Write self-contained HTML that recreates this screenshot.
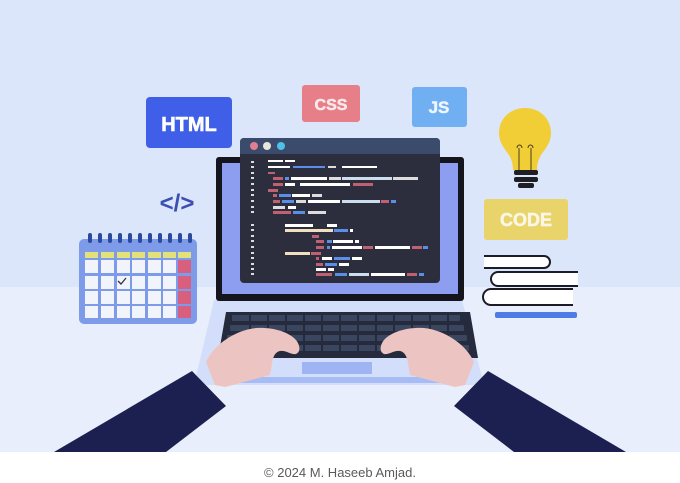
<!DOCTYPE html>
<html><head><meta charset="utf-8"><style>
html,body{margin:0;padding:0;width:680px;height:483px;overflow:hidden;background:#fff}
svg{display:block}
.cap{position:absolute;left:0;top:465px;width:680px;text-align:center;font:13px "Liberation Sans",sans-serif;color:#5a5a5a}
</style></head><body>
<svg width="680" height="452" viewBox="0 0 680 452" xmlns="http://www.w3.org/2000/svg" font-family="Liberation Sans, sans-serif">
<rect width="680" height="452" fill="#dce6fb"/>
<rect y="287" width="680" height="165" fill="#e8eefc"/>
<rect x="146" y="97" width="86" height="51" rx="4" fill="#3f5fe8"/>
<text x="189" y="131" text-anchor="middle" font-size="20" font-weight="bold" fill="#fff" stroke="#fff" stroke-width=".6">HTML</text>
<rect x="302" y="85" width="58" height="37" rx="3" fill="#e77f89"/>
<text x="331" y="110" text-anchor="middle" font-size="16" font-weight="bold" fill="#fbe8ea" stroke="#fbe8ea" stroke-width=".5">CSS</text>
<rect x="412" y="87" width="55" height="40" rx="3" fill="#70b0f2"/>
<text x="439" y="113" text-anchor="middle" font-size="17" font-weight="bold" fill="#eef6ff" stroke="#eef6ff" stroke-width=".5">JS</text>
<text x="177" y="211" text-anchor="middle" font-size="24" font-weight="bold" fill="#3a4fb0">&lt;/&gt;</text>
<path d="M525 108c-15 0-26 11-26 25 0 10 6 16 10 22 3 5 4 10 4 15h24c0-5 1-10 4-15 4-6 10-12 10-22 0-14-11-25-26-25z" fill="#f1cd36"/>
<path d="M519 170v-22m12 22v-22M517 148a2.5 3 0 1 1 5 0M528 148a2.5 3 0 1 1 5 0" stroke="#4a4020" stroke-width="1" fill="none"/>
<rect x="514" y="170" width="24" height="5" rx="2" fill="#1f1f24"/>
<rect x="514" y="177" width="24" height="5" rx="2" fill="#1f1f24"/>
<rect x="518" y="183" width="16" height="5" rx="2" fill="#1f1f24"/>
<rect x="484" y="199" width="84" height="41" rx="3" fill="#e8d46b"/>
<text x="526" y="226" text-anchor="middle" font-size="18" font-weight="bold" fill="#fbf7e4" stroke="#fbf7e4" stroke-width=".5">CODE</text>
<path d="M484 256h60a6 6 0 0 1 0 12h-60" fill="#fff" stroke="#1c1c28" stroke-width="2"/>
<path d="M578 272h-80a7 7 0 0 0 0 14h80" fill="#fff" stroke="#1c1c28" stroke-width="2"/>
<path d="M573 289h-82a8 8 0 0 0 0 16h82" fill="#fff" stroke="#1c1c28" stroke-width="2"/>
<rect x="495" y="312" width="82" height="6" rx="2" fill="#4f7be6"/>
<rect x="79" y="239" width="118" height="85" rx="5" fill="#7d9be9"/>
<g fill="#2a4aa0"><rect x="88" y="233" width="4" height="10" rx="2"/><rect x="98" y="233" width="4" height="10" rx="2"/><rect x="108" y="233" width="4" height="10" rx="2"/><rect x="118" y="233" width="4" height="10" rx="2"/><rect x="128" y="233" width="4" height="10" rx="2"/><rect x="138" y="233" width="4" height="10" rx="2"/><rect x="148" y="233" width="4" height="10" rx="2"/><rect x="158" y="233" width="4" height="10" rx="2"/><rect x="168" y="233" width="4" height="10" rx="2"/><rect x="178" y="233" width="4" height="10" rx="2"/><rect x="188" y="233" width="4" height="10" rx="2"/></g>
<g fill="#e3e27a"><rect x="85" y="252" width="13" height="6"/><rect x="101" y="252" width="13" height="6"/><rect x="117" y="252" width="13" height="6"/><rect x="132" y="252" width="13" height="6"/><rect x="148" y="252" width="13" height="6"/><rect x="163" y="252" width="13" height="6"/><rect x="178" y="252" width="13" height="6"/></g>
<g fill="#f2f4fc">
<rect x="85" y="260" width="13" height="13"/><rect x="101" y="260" width="13" height="13"/><rect x="117" y="260" width="13" height="13"/><rect x="132" y="260" width="13" height="13"/><rect x="148" y="260" width="13" height="13"/><rect x="163" y="260" width="13" height="13"/>
<rect x="85" y="276" width="13" height="13"/><rect x="101" y="276" width="13" height="13"/><rect x="117" y="276" width="13" height="13"/><rect x="132" y="276" width="13" height="13"/><rect x="148" y="276" width="13" height="13"/><rect x="163" y="276" width="13" height="13"/>
<rect x="85" y="291" width="13" height="13"/><rect x="101" y="291" width="13" height="13"/><rect x="117" y="291" width="13" height="13"/><rect x="132" y="291" width="13" height="13"/><rect x="148" y="291" width="13" height="13"/><rect x="163" y="291" width="13" height="13"/>
<rect x="85" y="306" width="13" height="12"/><rect x="101" y="306" width="13" height="12"/><rect x="117" y="306" width="13" height="12"/><rect x="132" y="306" width="13" height="12"/><rect x="148" y="306" width="13" height="12"/><rect x="163" y="306" width="13" height="12"/></g>
<g fill="#d8607e"><rect x="178" y="260" width="13" height="13"/><rect x="178" y="276" width="13" height="13"/><rect x="178" y="291" width="13" height="13"/><rect x="178" y="306" width="13" height="12"/></g>
<path d="M118 281l3 3 5-6" stroke="#333" stroke-width="1.3" fill="none"/>
<path d="M214 300h248l22 85h-290z" fill="#d3dffa"/>
<path d="M226 312h244l8 46h-260z" fill="#252a3c"/>
<g fill="#3a4560">
<rect x="232" y="315" width="228" height="6" rx="1"/><rect x="230" y="325" width="234" height="6" rx="1"/><rect x="227" y="335" width="240" height="6" rx="1"/><rect x="225" y="345" width="244" height="6" rx="1"/></g>
<g stroke="#252a3c" stroke-width="2"><path d="M250 314v40M268 314v40M286 314v40M304 314v40M322 314v40M340 314v40M358 314v40M376 314v40M394 314v40M412 314v40M430 314v40M448 314v40"/></g>
<rect x="302" y="362" width="70" height="12" fill="#9fb5f3"/>
<rect x="240" y="377" width="200" height="6" fill="#a7bbf4"/>
<rect x="216" y="157" width="248" height="144" rx="3" fill="#15161d"/>
<rect x="222" y="163" width="236" height="131" fill="#8d9ef0"/>
<rect x="240" y="138" width="200" height="145" rx="4" fill="#2c2e3d"/>
<path d="M244 138h192a4 4 0 0 1 4 4v12h-200v-12a4 4 0 0 1 4-4z" fill="#3a4b6c"/>
<circle cx="254" cy="146" r="4" fill="#e07f93"/><circle cx="267" cy="146" r="4" fill="#e8e5d9"/><circle cx="281" cy="146" r="4" fill="#4fc0e8"/>
<g fill="#ddd"><rect x="251" y="161" width="3" height="2"/><rect x="251" y="166" width="3" height="2"/><rect x="251" y="172" width="3" height="2"/><rect x="251" y="177" width="3" height="2"/><rect x="251" y="183" width="3" height="2"/><rect x="251" y="189" width="3" height="2"/><rect x="251" y="194" width="3" height="2"/><rect x="251" y="200" width="3" height="2"/><rect x="251" y="206" width="3" height="2"/><rect x="251" y="211" width="3" height="2"/><rect x="251" y="224" width="3" height="2"/><rect x="251" y="229" width="3" height="2"/><rect x="251" y="235" width="3" height="2"/><rect x="251" y="240" width="3" height="2"/><rect x="251" y="246" width="3" height="2"/><rect x="251" y="252" width="3" height="2"/><rect x="251" y="257" width="3" height="2"/><rect x="251" y="263" width="3" height="2"/><rect x="251" y="268" width="3" height="2"/><rect x="251" y="273" width="3" height="2"/></g>
<g>
<rect x="268" y="160" width="15" height="2" fill="#fff"/><rect x="285" y="160" width="10" height="2" fill="#fff"/>
<rect x="268" y="166" width="22" height="2" fill="#fff"/><rect x="293" y="166" width="32" height="2" fill="#5b8ee8"/><rect x="328" y="166" width="8" height="2" fill="#ddd"/><rect x="342" y="166" width="35" height="2" fill="#fff"/>
<rect x="268" y="172" width="7" height="2" fill="#c06070"/>
<rect x="273" y="177" width="10" height="3" fill="#c06070"/><rect x="285" y="177" width="4" height="3" fill="#5b8ee8"/><rect x="291" y="177" width="36" height="3" fill="#fff"/><rect x="329" y="177" width="12" height="3" fill="#ddd"/><rect x="342" y="177" width="50" height="3" fill="#cde"/><rect x="393" y="177" width="25" height="3" fill="#ddd"/>
<rect x="273" y="183" width="10" height="3" fill="#c06070"/><rect x="285" y="183" width="10" height="3" fill="#fff"/><rect x="300" y="183" width="50" height="3" fill="#fff"/><rect x="353" y="183" width="20" height="3" fill="#c06070"/>
<rect x="268" y="189" width="10" height="3" fill="#c06070"/>
<rect x="273" y="194" width="4" height="3" fill="#c06070"/><rect x="279" y="194" width="12" height="3" fill="#5b8ee8"/><rect x="292" y="194" width="18" height="3" fill="#fff"/><rect x="312" y="194" width="10" height="3" fill="#ddd"/>
<rect x="273" y="200" width="7" height="3" fill="#c06070"/><rect x="282" y="200" width="12" height="3" fill="#5b8ee8"/><rect x="296" y="200" width="10" height="3" fill="#ddd"/><rect x="308" y="200" width="32" height="3" fill="#fff"/><rect x="342" y="200" width="38" height="3" fill="#cde"/><rect x="381" y="200" width="8" height="3" fill="#c06070"/><rect x="391" y="200" width="5" height="3" fill="#5b8ee8"/>
<rect x="273" y="206" width="12" height="3" fill="#ddd"/><rect x="288" y="206" width="8" height="3" fill="#fff"/>
<rect x="273" y="211" width="18" height="3" fill="#c06070"/><rect x="293" y="211" width="12" height="3" fill="#5b8ee8"/><rect x="308" y="211" width="18" height="3" fill="#ddd"/>
<rect x="285" y="224" width="28" height="3" fill="#fff"/><rect x="327" y="224" width="10" height="3" fill="#fff"/>
<rect x="285" y="229" width="48" height="3" fill="#f0e0c0"/><rect x="334" y="229" width="14" height="3" fill="#5b8ee8"/><rect x="350" y="229" width="3" height="3" fill="#fff"/>
<rect x="312" y="235" width="7" height="3" fill="#c06070"/>
<rect x="316" y="240" width="8" height="3" fill="#c06070"/><rect x="327" y="240" width="5" height="3" fill="#5b8ee8"/><rect x="333" y="240" width="20" height="3" fill="#fff"/><rect x="355" y="240" width="4" height="3" fill="#fff"/>
<rect x="316" y="246" width="8" height="3" fill="#c06070"/><rect x="327" y="246" width="3" height="3" fill="#5b8ee8"/><rect x="332" y="246" width="30" height="3" fill="#fff"/><rect x="363" y="246" width="10" height="3" fill="#c06070"/><rect x="375" y="246" width="35" height="3" fill="#fff"/><rect x="412" y="246" width="10" height="3" fill="#c06070"/><rect x="423" y="246" width="5" height="3" fill="#5b8ee8"/>
<rect x="285" y="252" width="25" height="3" fill="#f0e0c0"/><rect x="311" y="252" width="10" height="3" fill="#c06070"/>
<rect x="316" y="257" width="3" height="3" fill="#c06070"/><rect x="322" y="257" width="10" height="3" fill="#fff"/><rect x="334" y="257" width="16" height="3" fill="#5b8ee8"/><rect x="352" y="257" width="10" height="3" fill="#fff"/>
<rect x="316" y="263" width="7" height="3" fill="#c06070"/><rect x="325" y="263" width="12" height="3" fill="#5b8ee8"/><rect x="339" y="263" width="10" height="3" fill="#fff"/>
<rect x="316" y="268" width="10" height="3" fill="#fff"/><rect x="328" y="268" width="6" height="3" fill="#fff"/>
<rect x="316" y="273" width="16" height="3" fill="#c06070"/><rect x="335" y="273" width="12" height="3" fill="#5b8ee8"/><rect x="349" y="273" width="20" height="3" fill="#cde"/><rect x="371" y="273" width="34" height="3" fill="#fff"/><rect x="407" y="273" width="10" height="3" fill="#c06070"/><rect x="419" y="273" width="5" height="3" fill="#5b8ee8"/>
</g>
<path d="M206 362c8-18 30-32 50-34 15-1 32 3 40 12 4 5 5 12 0 14-5 1-10-4-16-3-5 1-7 6-8 12l-2 12-45 12-10-2z" fill="#ecc4c2"/>
<path d="M474 362c-8-18-30-32-50-34-15-1-32 3-40 12-4 5-5 12 0 14 5 1 10-4 16-3 5 1 7 6 8 12l2 12 45 12 10-2z" fill="#ecc4c2"/>
<path d="M192 371l34 35-60 46h-112z" fill="#1c2050"/>
<path d="M488 371l-34 35 60 46h112z" fill="#1c2050"/>
</svg>
<div class="cap">© 2024 M. Haseeb Amjad.</div>
</body></html>
